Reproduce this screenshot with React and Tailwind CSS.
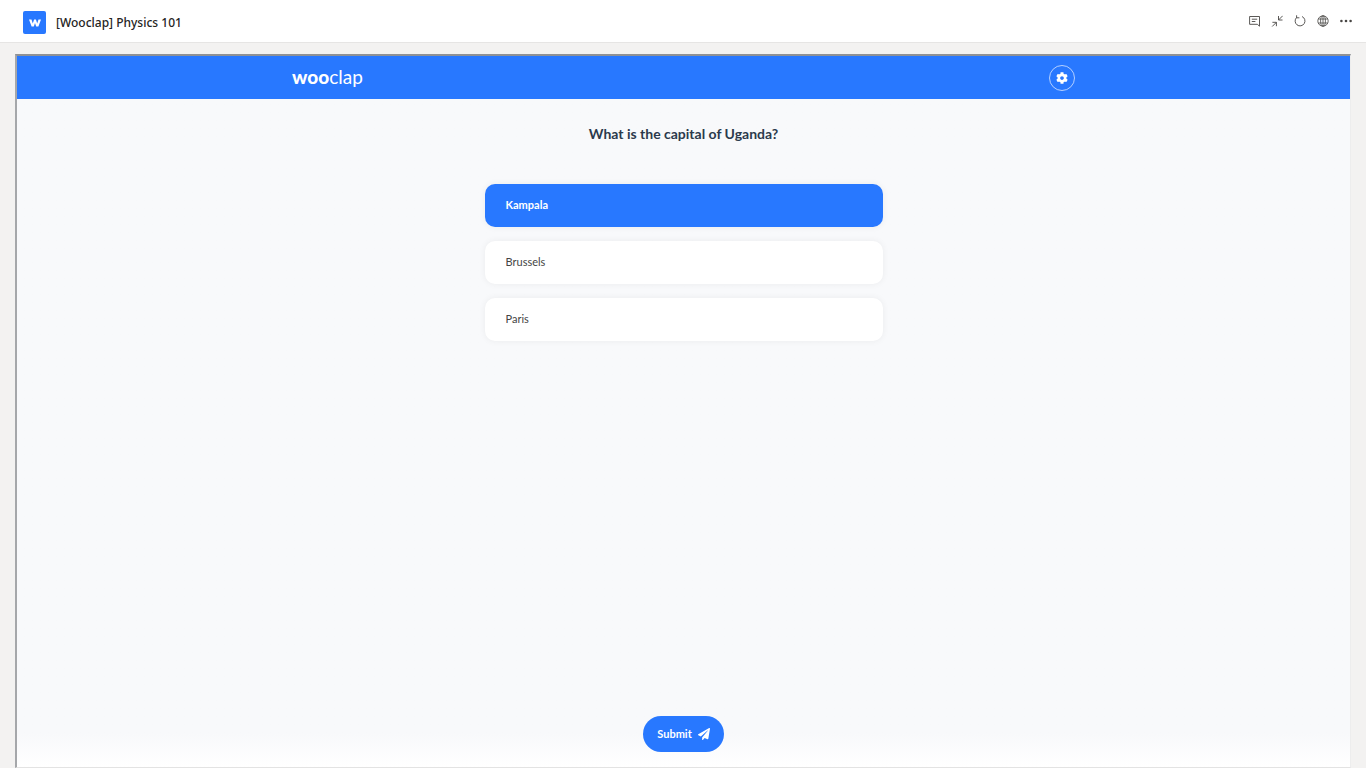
import React, { useState } from 'react';
import { FaCog, FaPaperPlane } from 'react-icons/fa';

const answers = ['Kampala', 'Brussels', 'Paris'];

const iconProps = {
  viewBox: '0 0 12 12',
  className: 'w-3 h-3',
  fill: 'none',
  stroke: 'currentColor',
  strokeWidth: 0.9,
  'aria-hidden': true,
};

function ChatIcon() {
  return (
    <svg {...iconProps}>
      <path d="M1.6 1.5h9.9v9.7L9.3 9.3H1.6z" />
      <path d="M3.8 4.2h5.4M3.8 6.5h3.6" />
    </svg>
  );
}

function CollapseIcon() {
  return (
    <svg {...iconProps}>
      <path d="M11.7.8 7.5 5M7.5 1V5h4" />
      <path d="M1.2 11.5 5.4 7.3M1.4 7.3h4v3.9" />
    </svg>
  );
}

function ReloadIcon() {
  return (
    <svg {...iconProps}>
      <path d="M2.6 2.5A4.9 4.9 0 1 0 8 1.5" />
      <path d="M2.6.3v2.5h2.8" />
    </svg>
  );
}

function GlobeIcon() {
  return (
    <svg {...iconProps} strokeWidth="0.8">
      <circle cx="6" cy="6" r="5.2" />
      <ellipse cx="6" cy="6" rx="2.4" ry="5.2" />
      <path d="M1.3 4h9.4M1.3 8h9.4M6 .8v10.4" />
    </svg>
  );
}

function MoreIcon() {
  return (
    <svg {...iconProps} fill="currentColor" stroke="none">
      <circle cx="1.4" cy="6" r="1.3" />
      <circle cx="6" cy="6" r="1.3" />
      <circle cx="10.6" cy="6" r="1.3" />
    </svg>
  );
}

const tools = [
  { label: 'Chat', Icon: ChatIcon },
  { label: 'Collapse', Icon: CollapseIcon },
  { label: 'Reload', Icon: ReloadIcon },
  { label: 'Open website', Icon: GlobeIcon },
  { label: 'More options', Icon: MoreIcon },
];

function AppBar() {
  return (
    <header className="flex items-center justify-between h-[43px] pl-[23px] pr-[14px] bg-white border-b border-[#e6e5e4]">
      <div className="flex items-center gap-[10px] pt-[3px]">
        <div className="flex items-center justify-center w-[23px] h-[23px] rounded-[2px] bg-[#2878ff] text-white">
          <svg viewBox="0 0 12 8" className="w-3 h-2" fill="currentColor" aria-hidden="true">
            <path d="M0 .4h2.5l1.3 4.2L5.1.4h1.8l1.3 4.2L9.5.4H12L9.4 7.6H7.2L6 4 4.8 7.6H2.6z" />
          </svg>
        </div>
        <h1 className="text-[12px] leading-5 font-medium text-[#252423] font-['Noto_Sans',sans-serif]">
          [Wooclap] Physics 101
        </h1>
      </div>
      <div className="flex items-center gap-[11px] text-[#484644]">
        {tools.map(({ label, Icon }) => (
          <button key={label} type="button" aria-label={label}>
            <Icon />
          </button>
        ))}
      </div>
    </header>
  );
}

export default function App() {
  const [selected, setSelected] = useState('Kampala');

  return (
    <div className="min-h-screen flex flex-col bg-[#f3f2f1] font-['Lato',sans-serif]">
      <AppBar />

      <main className="flex-1 flex flex-col mt-[11px] mx-[15px] border-t-2 border-l-2 border-r border-b border-t-[#8f9194] border-l-[#a5a7aa] border-r-[#ededed] border-b-[#e3e3e3] bg-[#f8f9fb]">
        <div className="h-[43px] bg-[#2878ff] text-white">
          <div className="max-w-[783px] h-full mx-auto flex items-center justify-between">
            <div className="text-[19px] leading-5 pb-[2px]">
              <span className="font-black">woo</span>clap
            </div>
            <button
              type="button"
              aria-label="Settings"
              className="flex items-center justify-center w-[26px] h-[26px] rounded-full border border-[#b5d0ff]"
            >
              <FaCog className="w-3 h-3" />
            </button>
          </div>
        </div>

        <form
          className="flex-1 flex flex-col items-center bg-linear-to-b from-[#f8f9fb] from-95% to-white"
          onSubmit={(e) => e.preventDefault()}
        >
          <h2 className="mt-[25px] text-[14px] leading-5 font-bold text-[#2b3a4c]">
            What is the capital of Uganda?
          </h2>

          <div className="mt-10 w-full max-w-[398px] flex flex-col gap-[14px]">
            {answers.map((answer) => {
              const active = answer === selected;
              return (
                <label
                  key={answer}
                  className={`h-[43px] px-[21px] pb-px flex items-center rounded-[10px] text-[11px] leading-4 cursor-pointer shadow-[0_0_7px_rgba(0,0,0,0.06)] ${
                    active ? 'bg-[#2878ff] text-white font-bold' : 'bg-white text-[#444444]'
                  }`}
                >
                  <input
                    type="radio"
                    name="answer"
                    value={answer}
                    checked={active}
                    onChange={() => setSelected(answer)}
                    className="sr-only"
                  />
                  {answer}
                </label>
              );
            })}
          </div>

          <button
            type="submit"
            className="mt-auto mb-[15px] h-9 px-[14px] flex items-center gap-[6px] rounded-full bg-[#2878ff] text-white text-[11px] leading-4 font-bold"
          >
            Submit
            <FaPaperPlane className="w-3 h-3" />
          </button>
        </form>
      </main>
    </div>
  );
}
